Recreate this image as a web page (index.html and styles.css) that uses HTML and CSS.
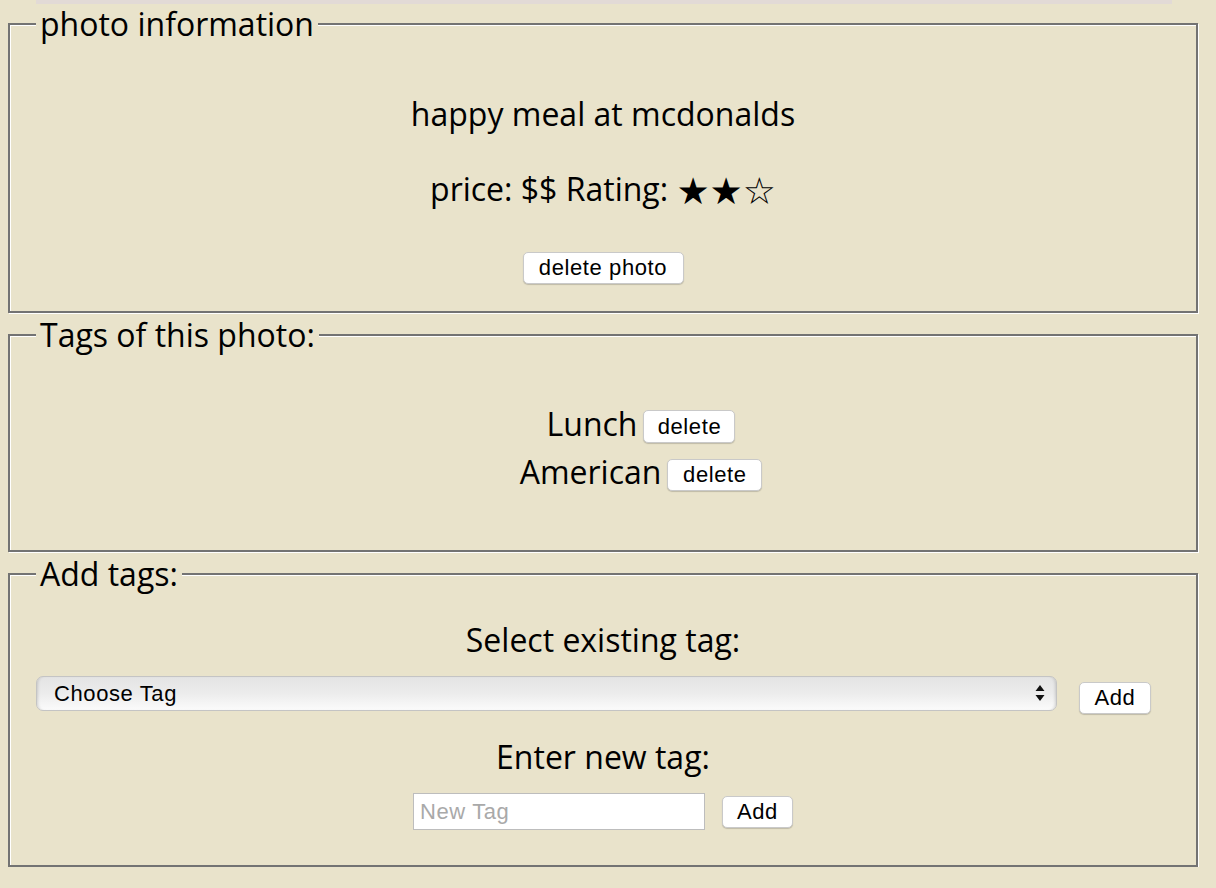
FILE: index.html
```html
<!DOCTYPE html>
<html>
<head>
<meta charset="utf-8">
<link rel="stylesheet" href="styles.css">
</head>
<body>
<div class="topbar"></div>
<fieldset class="box box-info">
  <legend>photo information</legend>
  <p class="title">happy meal at mcdonalds</p>
  <p class="meta">price: $$ Rating: <span class="stars">★★☆</span></p>
  <div class="btn-line"><button class="btn btn-photo">delete photo</button></div>
</fieldset>
<fieldset class="box box-tags">
  <legend>Tags of this photo:</legend>
  <div class="tag-list">
    <div class="tag-row"><span class="tag-name">Lunch</span><button class="btn btn-del">delete</button></div>
    <div class="tag-row"><span class="tag-name">American</span><button class="btn btn-del">delete</button></div>
  </div>
</fieldset>
<fieldset class="box box-add">
  <legend>Add tags:</legend>
  <p class="label label-select">Select existing tag:</p>
  <div class="select-row">
    <div class="select-wrap">
      <select class="select"><option>Choose Tag</option></select>
      <svg class="select-arrows" width="10" height="18" viewBox="0 0 10 18"><path d="M5 1 L9.5 7 L0.5 7 Z M0.5 11 L9.5 11 L5 17 Z" fill="#111"/></svg>
    </div>
    <button class="btn btn-add">Add</button>
  </div>
  <p class="label label-new">Enter new tag:</p>
  <div class="new-row">
    <input class="input" type="text" placeholder="New Tag">
    <button class="btn btn-add2">Add</button>
  </div>
</fieldset>
</body>
</html>
```
FILE: styles.css
```css
html, body {
  background: #e9e3cb;
}
body {
  margin: 0 8px;
  font-family: "Open Sans", "Noto Sans", sans-serif;
  color: #000;
}
.topbar {
  margin-left: 28px;
  width: 1136px;
  height: 4px;
  background: #e2dad6;
}
.box {
  margin: 0;
  border: 2px solid #737373;
  box-shadow: inset 1px 1px 0 #fff, 1px 1px 0 #fff;
  padding: 0 1px;
  text-align: center;
  width: 1190px;
  box-sizing: border-box;
}
.box legend {
  font-size: 32px;
  line-height: 40px;
  padding: 0 4px;
  margin-left: 25px;
  text-align: left;
  background: #e9e3cb;
}
.box-info {
  height: 309px;
}
.box-tags {
  margin-top: 2px;
  height: 237px;
}
.box-add {
  margin-top: 2px;
  height: 313px;
}
.title {
  margin: 48px 0 0;
  font-size: 32px;
  line-height: 44px;
}
.meta {
  margin: 31px 0 0;
  font-size: 32px;
  line-height: 44px;
}
.stars {
  font-family: "DejaVu Sans", sans-serif;
  font-size: 37px;
  line-height: 1;
  vertical-align: -3px;
}
.btn {
  font-family: "Liberation Sans", Arial, sans-serif;
  font-size: 22px;
  letter-spacing: 0.6px;
  background: #fff;
  color: #000;
  border: 1px solid #c9c9c9;
  border-radius: 5px;
  box-shadow: 0 1px 1px rgba(0,0,0,0.18);
  padding: 0;
  height: 32px;
}
.btn-line {
  display: flex;
  justify-content: center;
  margin-top: 41px;
}
.btn-photo {
  width: 161px;
}
.tag-list {
  margin-top: 47px;
  padding-left: 76px;
  display: flex;
  flex-direction: column;
  align-items: center;
  gap: 4px;
}
.tag-row {
  display: flex;
  align-items: flex-start;
  gap: 6px;
  height: 44px;
}
.tag-name {
  font-size: 32px;
  line-height: 44px;
}
.btn-del {
  width: 92px;
  height: 33px;
  margin-top: 8px;
}
.tag-row:nth-child(2) .btn-del {
  width: 95px;
  height: 32px;
  margin-top: 9px;
}
.label {
  margin: 0;
  font-size: 32px;
  line-height: 44px;
}
.label-select {
  margin-top: 24px;
}
.select-row {
  display: flex;
  align-items: flex-start;
  margin-top: 14px;
  padding-left: 25px;
  gap: 22px;
}
.select-wrap {
  position: relative;
  width: 1021px;
  height: 35px;
}
.select {
  -webkit-appearance: none;
  appearance: none;
  width: 100%;
  height: 100%;
  border: 1px solid #c4c4c4;
  border-radius: 7px;
  background: linear-gradient(to bottom, #e4e4e4 0%, #ececec 50%, #fbfbfb 100%);
  box-shadow: inset 3px 0 3px -2px rgba(0,0,0,0.15), inset -3px 0 3px -2px rgba(0,0,0,0.15);
  font-family: "Liberation Sans", Arial, sans-serif;
  font-size: 22px;
  letter-spacing: 0.6px;
  padding: 0 0 0 17px;
  color: #000;
}
.select-arrows {
  position: absolute;
  right: 12px;
  top: 8px;
}
.btn-add {
  margin-top: 6px;
  width: 72px;
}
.label-new {
  margin-top: 21px;
}
.new-row {
  display: flex;
  justify-content: center;
  align-items: center;
  gap: 17px;
  margin-top: 14px;
}
.input {
  width: 292px;
  height: 37px;
  box-sizing: border-box;
  border: 1px solid #bdbdbd;
  background: #fff;
  font-family: "Liberation Sans", Arial, sans-serif;
  font-size: 22px;
  letter-spacing: 0.6px;
  padding: 0 6px;
  margin: 0;
}
.input::placeholder {
  color: #a9a9a9;
}
.btn-add2 {
  width: 71px;
}
```
